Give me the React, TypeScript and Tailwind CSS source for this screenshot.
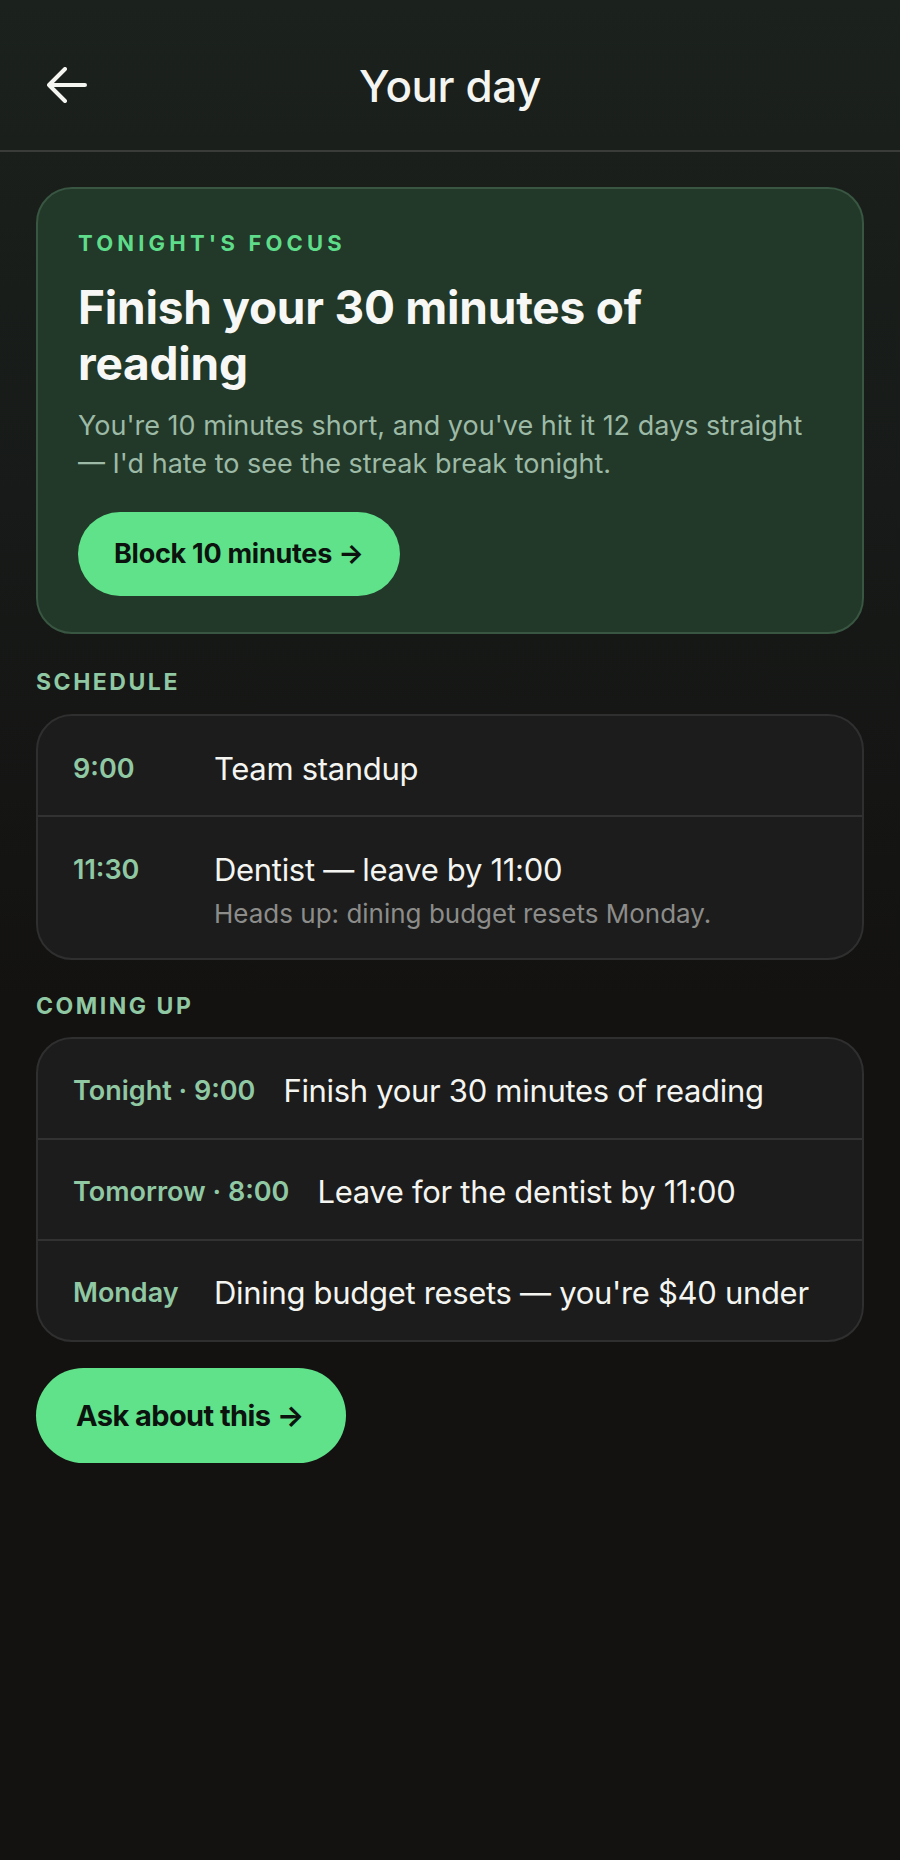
import React from "react";

const schedule = [
  { time: "9:00", title: "Team standup" },
  {
    time: "11:30",
    title: "Dentist — leave by 11:00",
    note: "Heads up: dining budget resets Monday.",
  },
];

const comingUp = [
  { when: "Tonight · 9:00", title: "Finish your 30 minutes of reading" },
  { when: "Tomorrow · 8:00", title: "Leave for the dentist by 11:00" },
  { when: "Monday", title: "Dining budget resets — you're $40 under" },
];

const BackArrow = () => (
  <svg width="40" height="36" viewBox="0 0 40 36" fill="none">
    <path
      d="M18 2 L2 18 L18 34 M2 18 H38"
      stroke="#f4f5f1"
      strokeWidth="4"
      strokeLinecap="round"
      strokeLinejoin="round"
    />
  </svg>
);

const App = () => {
  return (
    <div
      className="min-h-[1860px] w-[900px] bg-[linear-gradient(180deg,#1b211d_0px,#171a18_500px,#131211_1000px)] text-[#f4f5f1]"
      style={{ fontFamily: "Inter, 'Noto Sans', sans-serif" }}
    >
      {/* header */}
      <div className="relative flex h-[152px] items-center justify-center border-b-2 border-[#393c39] pt-[22px]">
        <div className="absolute left-[47px] top-[67px]">
          <BackArrow />
        </div>
        <h1 className="text-[44px] font-medium leading-none tracking-[-0.01em]">Your day</h1>
      </div>

      <div className="px-9 pt-[35px]">
        {/* focus card */}
        <div className="rounded-[36px] border-2 border-[#385641] bg-[#223829] px-10 pt-[43px] pb-[36px]">
          <div className="text-[22px] font-bold uppercase leading-none tracking-[0.19em] text-[#5edc89]">
            Tonight's Focus
          </div>
          <h2 className="mt-[25px] text-[46px] font-bold leading-[56px] tracking-[-0.005em] text-[#f7f8f5]">
            Finish your 30 minutes of
            <br />
            reading
          </h2>
          <p className="mt-[16px] text-[27px] leading-[38px] text-[#9dbaa6]">
            You're 10 minutes short, and you've hit it 12 days straight
            <br />— I'd hate to see the streak break tonight.
          </p>
          <button className="mt-[29px] flex h-[84px] items-center rounded-full bg-[#5fe28a] px-9 text-[27px] font-bold tracking-[-0.01em] text-[#0c120e]">
            Block 10 minutes →
          </button>
        </div>

        {/* schedule */}
        <div className="mt-[37px] text-[23px] font-bold uppercase leading-none tracking-[0.11em] text-[#90c8a3]">
          Schedule
        </div>
        <div className="mt-[20px] overflow-hidden rounded-[36px] border-2 border-[#2f2f2f] bg-[#1c1c1c]">
          {schedule.map((row, i) => (
            <div
              key={row.time}
              className={`flex items-start px-[35px] pt-[34px] pb-[27px] ${i > 0 ? "border-t-2 border-[#323232]" : ""}`}
            >
              <div className="w-[141px] shrink-0 pt-[1px] text-[27px] font-semibold leading-[36px] text-[#90c8a3]">
                {row.time}
              </div>
              <div>
                <div className="text-[31px] leading-[38px] tracking-[-0.01em] text-[#f4f5f1]">{row.title}</div>
                {row.note && (
                  <div className="mt-[8px] text-[26px] leading-[34px] text-[#8c8c8a]">
                    {row.note}
                  </div>
                )}
              </div>
            </div>
          ))}
        </div>

        {/* coming up */}
        <div className="mt-[35px] text-[23px] font-bold uppercase leading-none tracking-[0.11em] text-[#90c8a3]">
          Coming up
        </div>
        <div className="mt-[19px] overflow-hidden rounded-[36px] border-2 border-[#2f2f2f] bg-[#1c1c1c]">
          {comingUp.map((row, i) => (
            <div
              key={row.when}
              className={`flex items-center gap-[28px] px-[35px] pt-[33px] pb-[28px] ${i > 0 ? "border-t-2 border-[#323232]" : ""}`}
            >
              <div className="min-w-[113px] shrink-0 text-[27px] font-semibold leading-[38px] text-[#90c8a3]">
                {row.when}
              </div>
              <div className="text-[31px] leading-[38px] tracking-[-0.01em] text-[#f4f5f1]">{row.title}</div>
            </div>
          ))}
        </div>

        <button className="mt-[26px] flex h-[95px] items-center rounded-full bg-[#5fe28a] pl-10 pr-[42px] text-[29px] font-bold tracking-[-0.02em] text-[#0c120e]">
          Ask about this →
        </button>
      </div>
    </div>
  );
};

export default App;
